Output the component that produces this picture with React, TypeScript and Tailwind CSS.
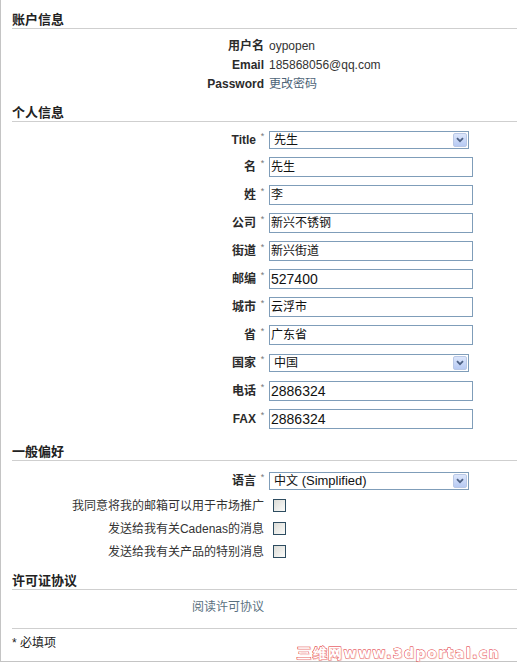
import type { ReactNode } from "react";

const FONT = "font-['Liberation_Sans','Noto_Sans_CJK_SC',sans-serif]";

function SectionHeader({ title, className = "" }: { title: string; className?: string }) {
  return (
    <div
      className={`h-[17px] border-b border-[#cfcfcf] text-[13px] font-bold leading-[16px] text-[#222] ${className}`}
    >
      {title}
    </div>
  );
}

function InfoRow({ label, children }: { label: string; children: ReactNode }) {
  return (
    <div className="flex h-[19px] items-center">
      <div className="w-[252px] text-right text-[12px] font-bold text-[#2b2b2b]">{label}</div>
      <div className="ml-[5px] text-[12px] text-[#333]">{children}</div>
    </div>
  );
}

function SelectArrow() {
  return (
    <span className="flex h-[14px] w-[14px] items-center justify-center rounded-[2px] border border-[#b9c8e6] bg-gradient-to-b from-[#dce6fb] to-[#b7caf3]">
      <svg width="8" height="6" viewBox="0 0 8 6">
        <path d="M1 1.2 L4 4.2 L7 1.2" fill="none" stroke="#4d6185" strokeWidth="1.8" />
      </svg>
    </span>
  );
}

function FakeSelect({ children }: { children: ReactNode }) {
  return (
    <div className="flex h-[18px] w-[200px] items-center justify-between border border-[#7f9db9] bg-white pl-[4px] pr-[1px] text-[#111]">
      <span className="flex items-center">{children}</span>
      <SelectArrow />
    </div>
  );
}

function FakeInput({ value, cjk }: { value: string; cjk?: boolean }) {
  return (
    <div
      className={`flex h-[20px] w-[204px] items-center border border-[#7f9db9] bg-white pl-[1px] text-[#111] ${
        cjk ? "text-[12px]" : "text-[14px]"
      }`}
    >
      {value}
    </div>
  );
}

function FormRow({ label, height = "h-[28px]", children }: { label: string; height?: string; children: ReactNode }) {
  return (
    <div className={`flex items-center ${height}`}>
      <div className="w-[244px] text-right text-[12px] font-bold text-[#2b2b2b]">{label}</div>
      <div className="flex w-[13px] justify-center self-center">
        <span className="mb-[7px] text-[9px] leading-none text-[#777]">*</span>
      </div>
      {children}
    </div>
  );
}

function CheckRow({ label }: { label: string }) {
  return (
    <div className="flex h-[23px] items-center">
      <div className="w-[252px] text-right text-[12px] text-[#333]">{label}</div>
      <span className="ml-[9px] block h-[13px] w-[13px] border border-[#2d4c60] bg-gradient-to-br from-[#dcdcd7] to-[#fbfbf9]" />
    </div>
  );
}

const fields: { label: string; value: string; cjk?: boolean }[] = [
  { label: "名", value: "先生", cjk: true },
  { label: "姓", value: "李", cjk: true },
  { label: "公司", value: "新兴不锈钢", cjk: true },
  { label: "街道", value: "新兴街道", cjk: true },
  { label: "邮编", value: "527400" },
  { label: "城市", value: "云浮市", cjk: true },
  { label: "省", value: "广东省", cjk: true },
];

export default function App() {
  return (
    <div className={`relative min-h-[667px] bg-white ${FONT}`}>
      <div className="border-b border-l border-[#c4c4c4] pb-[9px] pl-[11px] pt-[12px]">
        {/* 账户信息 */}
        <SectionHeader title="账户信息" />
        <div className="mt-[7px]">
          <InfoRow label="用户名">oypopen</InfoRow>
          <InfoRow label="Email">185868056@qq.com</InfoRow>
          <InfoRow label="Password">
            <span className="text-[#4e6478]">更改密码</span>
          </InfoRow>
        </div>

        {/* 个人信息 */}
        <SectionHeader title="个人信息" className="mt-[12px]" />
        <div className="mt-[5px]">
          <FormRow label="Title" height="h-[26px]">
            <FakeSelect>
              <span className="text-[12px]">先生</span>
            </FakeSelect>
          </FormRow>
          {fields.map((f) => (
            <FormRow key={f.label} label={f.label}>
              <FakeInput value={f.value} cjk={f.cjk} />
            </FormRow>
          ))}
          <FormRow label="国家">
            <FakeSelect>
              <span className="text-[12px]">中国</span>
            </FakeSelect>
          </FormRow>
          <FormRow label="电话">
            <FakeInput value="2886324" />
          </FormRow>
          <FormRow label="FAX">
            <FakeInput value="2886324" />
          </FormRow>
        </div>

        {/* 一般偏好 */}
        <SectionHeader title="一般偏好" className="mt-[11px]" />
        <div className="mt-[7px]">
          <FormRow label="语言" height="h-[26px]">
            <FakeSelect>
              <span className="text-[12px]">中文</span>
              <span className="whitespace-pre text-[13px]"> (Simplified)</span>
            </FakeSelect>
          </FormRow>
          <CheckRow label="我同意将我的邮箱可以用于市场推广" />
          <CheckRow label="发送给我有关Cadenas的消息" />
          <CheckRow label="发送给我有关产品的特别消息" />
        </div>

        {/* 许可证协议 */}
        <SectionHeader title="许可证协议" className="mt-[10px]" />
        <div className="mt-[7px] flex h-[19px] items-center">
          <div className="w-[252px] text-right text-[12px] text-[#5a7080]">阅读许可协议</div>
        </div>

        <div className="mt-[12px] border-t border-[#cfcfcf]" />
        <div className="mt-[4px] flex h-[19px] items-center text-[12px] text-[#222]">* 必填项</div>
      </div>

      {/* watermark */}
      <div className="absolute left-[297px] top-[645px] font-['DejaVu_Sans',sans-serif] text-[14px] font-bold leading-[16px] tracking-[1.5px] text-white [-webkit-text-stroke:0.9px_#e0221f] [paint-order:stroke_fill] [text-shadow:1px_1px_1px_#f3b0b0]">
        三维网www.3dportal.cn
      </div>
    </div>
  );
}
